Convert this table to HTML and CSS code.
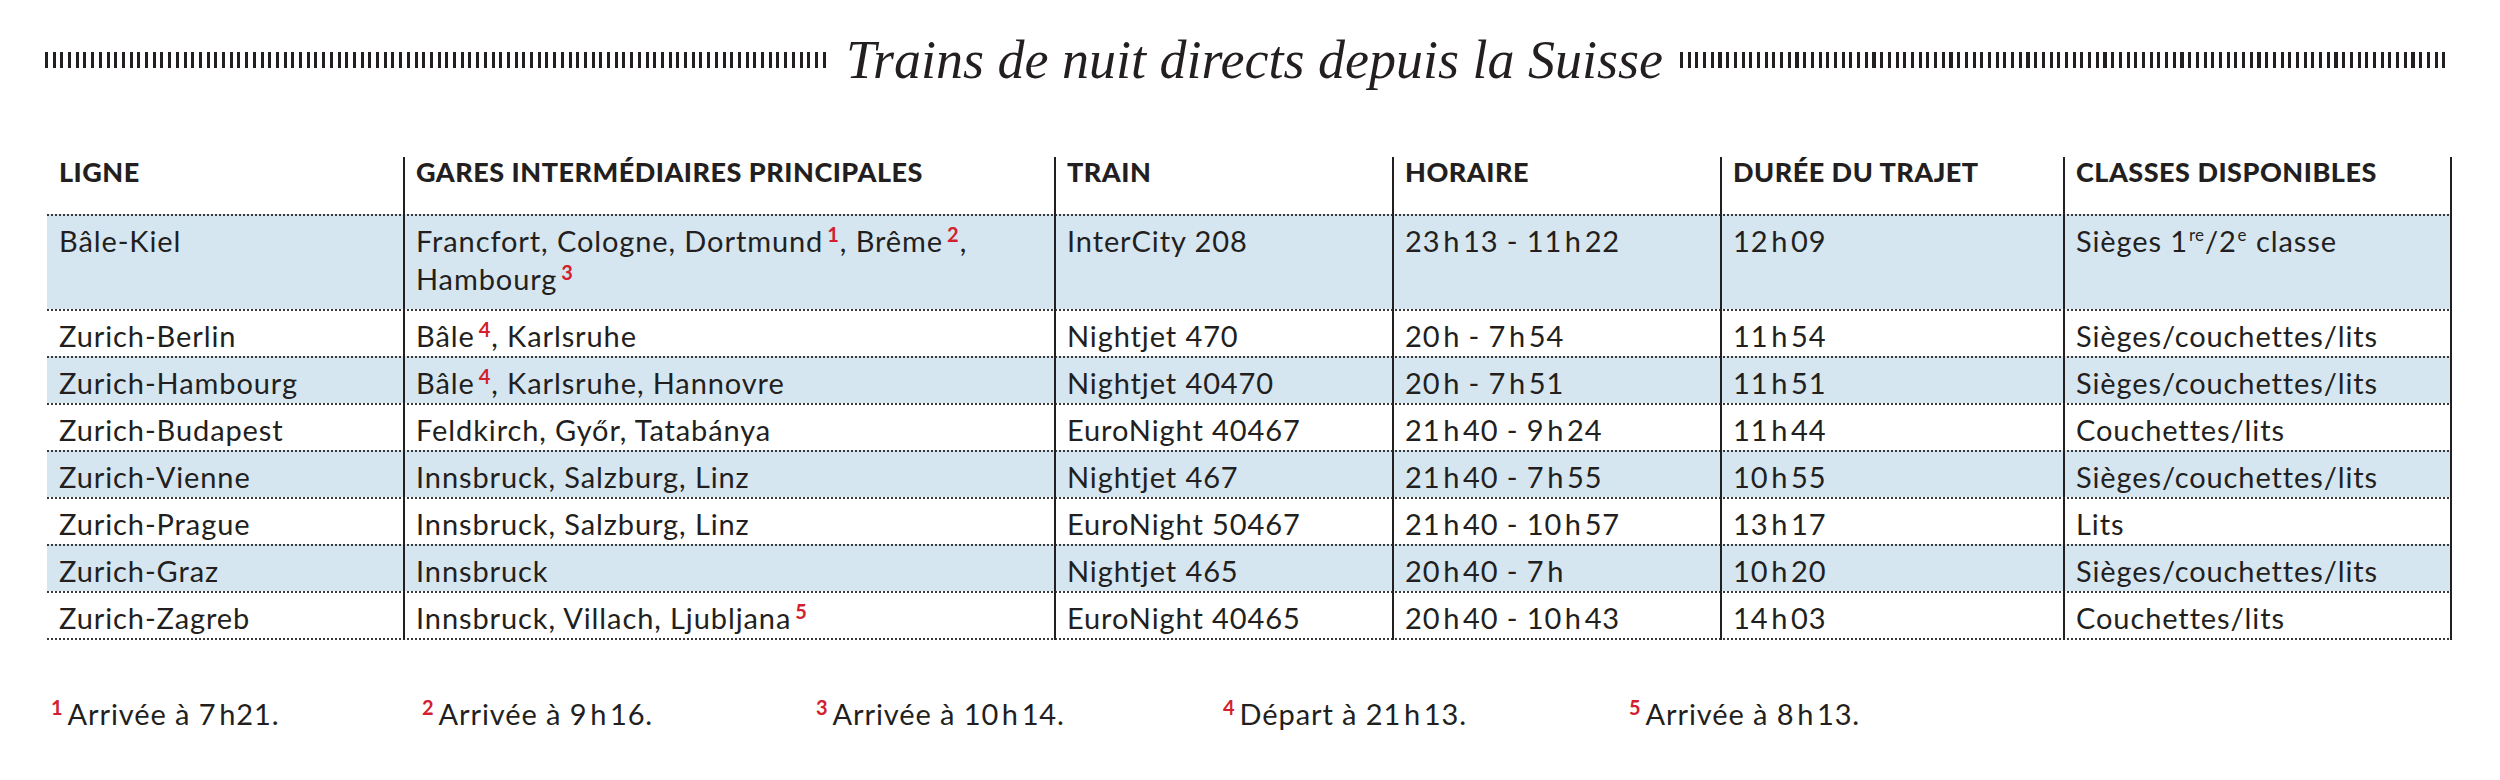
FILE: index.html
```html
<!DOCTYPE html>
<html lang="fr">
<head>
<meta charset="utf-8">
<title>Trains de nuit directs depuis la Suisse</title>
<link rel="stylesheet" href="styles.css">
</head>
<body>
<div class="page">
  <div class="title-bar">
    <span class="hatch hatch-left"></span>
    <h1 class="title">Trains de nuit directs depuis la Suisse</h1>
    <span class="hatch hatch-right"></span>
  </div>

  <div class="routes">
    <div class="row head">
      <div class="cell">LIGNE</div>
      <div class="cell">GARES INTERMÉDIAIRES PRINCIPALES</div>
      <div class="cell">TRAIN</div>
      <div class="cell">HORAIRE</div>
      <div class="cell">DURÉE DU TRAJET</div>
      <div class="cell">CLASSES DISPONIBLES</div>
    </div>
    <div class="row shade tall">
      <div class="cell">Bâle-Kiel</div>
      <div class="cell"><span>Francfort, Cologne, Dortmund</span><sup class="fn">1</sup><span>, Brême</span><sup class="fn">2</sup><span>,</span><br><span>Hambourg</span><sup class="fn">3</sup></div>
      <div class="cell">InterCity 208</div>
      <div class="cell">23&#8202;h&#8202;13 - 11&#8202;h&#8202;22</div>
      <div class="cell">12&#8202;h&#8202;09</div>
      <div class="cell">Sièges 1<sup class="ord">re</sup>/2<sup class="ord">e</sup> classe</div>
    </div>
    <div class="row">
      <div class="cell">Zurich-Berlin</div>
      <div class="cell">Bâle<sup class="fn">4</sup>, Karlsruhe</div>
      <div class="cell">Nightjet 470</div>
      <div class="cell">20&#8202;h - 7&#8202;h&#8202;54</div>
      <div class="cell">11&#8202;h&#8202;54</div>
      <div class="cell">Sièges/couchettes/lits</div>
    </div>
    <div class="row shade">
      <div class="cell">Zurich-Hambourg</div>
      <div class="cell">Bâle<sup class="fn">4</sup>, Karlsruhe, Hannovre</div>
      <div class="cell">Nightjet 40470</div>
      <div class="cell">20&#8202;h - 7&#8202;h&#8202;51</div>
      <div class="cell">11&#8202;h&#8202;51</div>
      <div class="cell">Sièges/couchettes/lits</div>
    </div>
    <div class="row">
      <div class="cell">Zurich-Budapest</div>
      <div class="cell">Feldkirch, Győr, Tatabánya</div>
      <div class="cell">EuroNight 40467</div>
      <div class="cell">21&#8202;h&#8202;40 - 9&#8202;h&#8202;24</div>
      <div class="cell">11&#8202;h&#8202;44</div>
      <div class="cell">Couchettes/lits</div>
    </div>
    <div class="row shade">
      <div class="cell">Zurich-Vienne</div>
      <div class="cell">Innsbruck, Salzburg, Linz</div>
      <div class="cell">Nightjet 467</div>
      <div class="cell">21&#8202;h&#8202;40 - 7&#8202;h&#8202;55</div>
      <div class="cell">10&#8202;h&#8202;55</div>
      <div class="cell">Sièges/couchettes/lits</div>
    </div>
    <div class="row">
      <div class="cell">Zurich-Prague</div>
      <div class="cell">Innsbruck, Salzburg, Linz</div>
      <div class="cell">EuroNight 50467</div>
      <div class="cell">21&#8202;h&#8202;40 - 10&#8202;h&#8202;57</div>
      <div class="cell">13&#8202;h&#8202;17</div>
      <div class="cell">Lits</div>
    </div>
    <div class="row shade">
      <div class="cell">Zurich-Graz</div>
      <div class="cell">Innsbruck</div>
      <div class="cell">Nightjet 465</div>
      <div class="cell">20&#8202;h&#8202;40 - 7&#8202;h</div>
      <div class="cell">10&#8202;h&#8202;20</div>
      <div class="cell">Sièges/couchettes/lits</div>
    </div>
    <div class="row last">
      <div class="cell">Zurich-Zagreb</div>
      <div class="cell">Innsbruck, Villach, Ljubljana<sup class="fn">5</sup></div>
      <div class="cell">EuroNight 40465</div>
      <div class="cell">20&#8202;h&#8202;40 - 10&#8202;h&#8202;43</div>
      <div class="cell">14&#8202;h&#8202;03</div>
      <div class="cell">Couchettes/lits</div>
    </div>
  </div>

  <div class="notes">
    <div class="note"><sup class="fn">1</sup>Arrivée à 7&#8202;h21.</div>
    <div class="note"><sup class="fn">2</sup>Arrivée à 9&#8202;h&#8202;16.</div>
    <div class="note"><sup class="fn">3</sup>Arrivée à 10&#8202;h&#8202;14.</div>
    <div class="note"><sup class="fn">4</sup>Départ à 21&#8202;h&#8202;13.</div>
    <div class="note"><sup class="fn">5</sup>Arrivée à 8&#8202;h&#8202;13.</div>
  </div>
</div>
</body>
</html>
```

FILE: styles.css
```css
html, body {
  margin: 0;
  padding: 0;
  background: #ffffff;
}

body {
  width: 2500px;
  height: 780px;
  overflow: hidden;
  color: #231f20;
  font-family: "Lato", "Noto Sans", sans-serif;
}

.page {
  padding-left: 47px;
  width: 2405px;
}

/* ---------- title ---------- */
.title-bar {
  display: flex;
  align-items: center;
  gap: 17px;
  height: 60px;
  margin: 30px 3px 0 -2px;
}

.hatch {
  height: 16px;
  background: repeating-linear-gradient(90deg, #231f20 0 3px, transparent 3px 7.7px);
}

.hatch-left {
  width: 784px;
  flex: none;
}

.hatch-right {
  flex: 1;
}

.title {
  margin: 0;
  font-family: "Liberation Serif", "Times New Roman", serif;
  font-style: italic;
  font-weight: normal;
  font-size: 54px;
  line-height: 60px;
  white-space: nowrap;
  color: #231f20;
}

/* ---------- table ---------- */
.routes {
  margin-top: 67px;
}

.row {
  display: grid;
  grid-template-columns: 356px 651px 338px 328px 343px 389px;
  height: 47px;
  font-size: 29px;
  line-height: 38px;
  letter-spacing: 0.9px;
  background:
    repeating-linear-gradient(90deg, #3a3a3a 0 2px, transparent 2px 4px) top left / 100% 2px no-repeat,
    #ffffff;
}

.row.shade {
  background:
    repeating-linear-gradient(90deg, #3a3a3a 0 2px, transparent 2px 4px) top left / 100% 2px no-repeat,
    #d6e6f1;
}

.row.tall {
  height: 95px;
}

.row.last {
  height: 49px;
  background:
    repeating-linear-gradient(90deg, #3a3a3a 0 2px, transparent 2px 4px) top left / 100% 2px no-repeat,
    repeating-linear-gradient(90deg, #3a3a3a 0 2px, transparent 2px 4px) bottom left / 100% 2px no-repeat,
    #ffffff;
}

.row.head {
  height: 57px;
  background: #ffffff;
  font-weight: 900;
  font-size: 27px;
  line-height: 30px;
  letter-spacing: 0.5px;
}

.cell {
  box-sizing: border-box;
  padding: 8px 6px 0 12px;
  white-space: normal;
}

.row.head .cell {
  padding-top: 0;
}

.cell + .cell {
  border-left: 2px solid #231f20;
  padding-left: 11px;
}

.cell:last-child {
  border-right: 2px solid #231f20;
}

.fn {
  color: #d3202f;
  font-weight: 700;
  font-size: 20px;
  letter-spacing: 0;
  line-height: 0;
  vertical-align: 10px;
  margin: 0 1px 0 4px;
}

.ord {
  font-size: 17px;
  letter-spacing: 0;
  line-height: 0;
  vertical-align: 11px;
  margin: 0 1px;
}

/* ---------- footnotes ---------- */
.notes {
  display: grid;
  grid-template-columns: 371px 394px 407px 406px auto;
  margin-top: 55px;
  padding-left: 4px;
  font-size: 29px;
  line-height: 38px;
  letter-spacing: 0.9px;
}

.notes .fn {
  margin: 0 5px 0 0;
}
```
